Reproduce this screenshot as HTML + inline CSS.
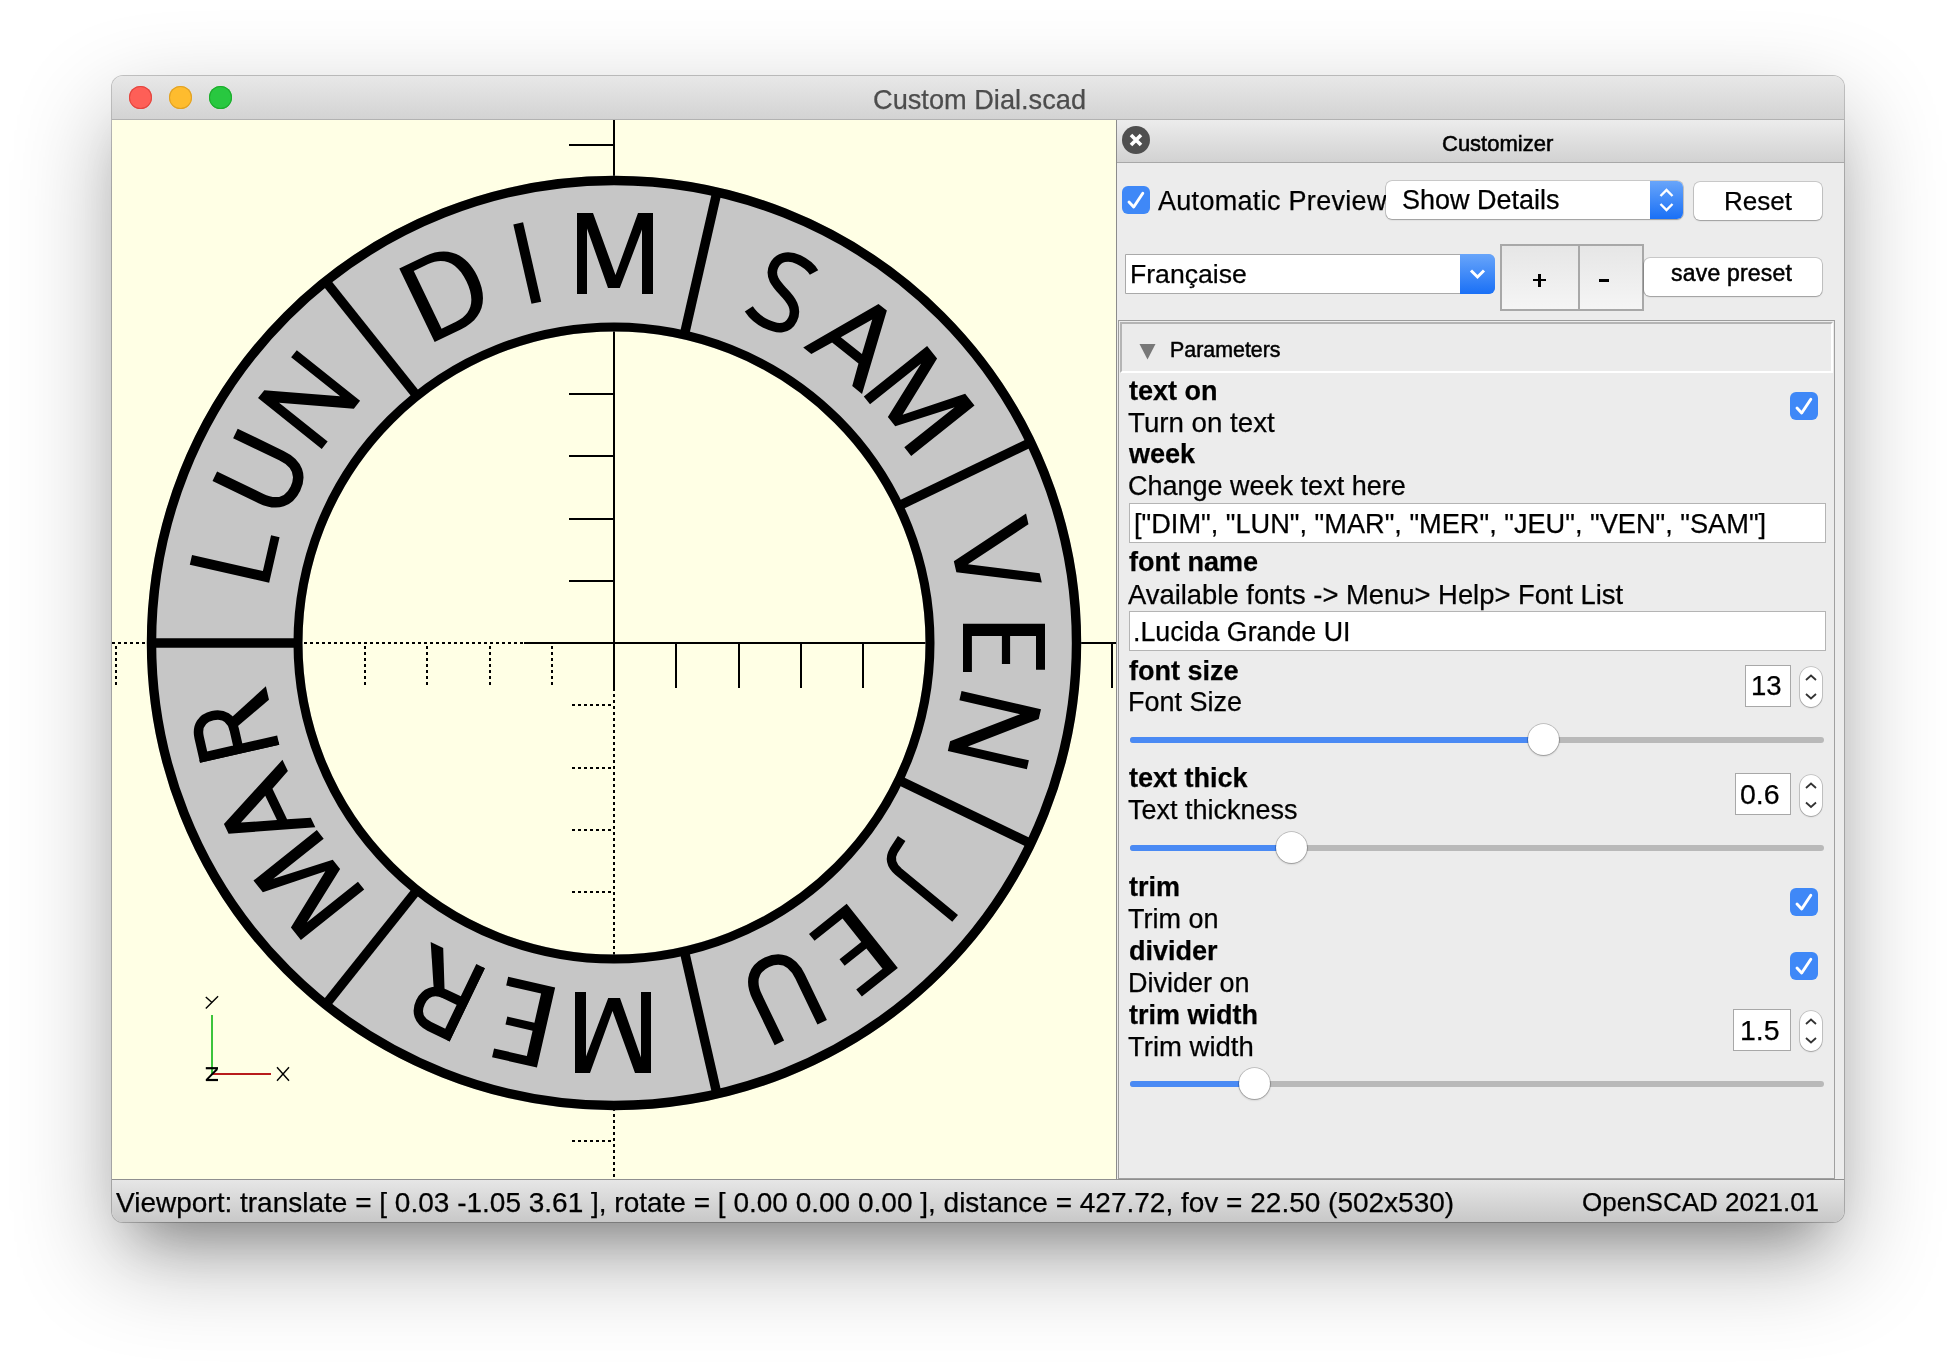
<!DOCTYPE html>
<html><head><meta charset="utf-8">
<style>
html,body{margin:0;padding:0;width:1956px;height:1370px;background:#fff;overflow:hidden;font-family:"Liberation Sans",sans-serif;color:#000}
.a{position:absolute}
.t{position:absolute;white-space:pre;line-height:1;font-size:27px;will-change:transform;-webkit-text-stroke:0.25px currentColor}
.b{font-weight:bold}
#win{left:112px;top:76px;width:1732px;height:1146px;border-radius:11px;background:#ececec;box-shadow:0 0 0 1px rgba(0,0,0,0.22),0 37px 98px rgba(0,0,0,0.30),0 40px 50px -30px rgba(0,0,0,0.30)}
#title{left:112px;top:76px;width:1732px;height:43px;border-radius:11px 11px 0 0;background:linear-gradient(#e8e8e8,#d3d3d3);border-bottom:1px solid #b2b2b2}
.light{width:23px;height:23px;border-radius:50%;top:86px}
#vp{left:112px;top:120px;width:1004px;height:1059px;background:#ffffe5;overflow:hidden}
#dockhdr{left:1117px;top:120px;width:727px;height:42px;background:linear-gradient(#ececec,#d2d2d2);border-bottom:1px solid #a8a8a8}
#status{left:112px;top:1179px;width:1732px;height:43px;border-radius:0 0 11px 11px;background:linear-gradient(#e6e6e6,#c8c8c8);border-top:1px solid #8f8f8f;box-sizing:border-box}
.cb{width:28px;height:28px;border-radius:6px;background:#3f88f7}
.cb svg{position:absolute;left:0;top:0}
.field{background:#fff;border:1px solid #b4b4b4;box-sizing:border-box}
.slider{height:6px;border-radius:3px;background:#b9b9b9}
.fill{height:6px;border-radius:3px;background:#4a8af4}
.knob{width:31px;height:31px;border-radius:50%;background:#fff;box-shadow:0 0 0 0.8px rgba(0,0,0,0.22),0 1px 2px rgba(0,0,0,0.25)}
.step{width:22px;border-radius:11px;background:#fff;box-shadow:0 0 0 0.8px rgba(0,0,0,0.2),0 1px 1.5px rgba(0,0,0,0.2)}
.btn{background:#fff;border-radius:6px;box-shadow:0 0 0 0.8px rgba(0,0,0,0.2),0 1px 1.5px rgba(0,0,0,0.22)}
</style></head><body>
<div id="win" class="a"></div>
<div id="title" class="a"></div>
<div class="a light" style="left:128.5px;background:#fe5f57;box-shadow:inset 0 0 0 1px #e2463f"></div>
<div class="a light" style="left:168.5px;background:#febc2e;box-shadow:inset 0 0 0 1px #e0a125"></div>
<div class="a light" style="left:208.5px;background:#28c840;box-shadow:inset 0 0 0 1px #1dac2c"></div>
<div class="t" style="left:873px;top:86px;color:#4d4d4d;font-size:27.2px">Custom Dial.scad</div>

<div id="vp" class="a">
<svg width="1004" height="1059" viewBox="0 0 1004 1059" style="position:absolute;left:0;top:0">
<g shape-rendering="crispEdges"><line x1="0.00" y1="523.00" x2="412.00" y2="523.00" stroke="#000" stroke-width="2" stroke-dasharray="3 3"/>
<line x1="412.00" y1="523.00" x2="1004.00" y2="523.00" stroke="#000" stroke-width="2"/>
<line x1="502.00" y1="0.00" x2="502.00" y2="570.60" stroke="#000" stroke-width="2"/>
<line x1="502.00" y1="574.00" x2="502.00" y2="1059.00" stroke="#000" stroke-width="2" stroke-dasharray="3 3"/>
<line x1="564.25" y1="523.00" x2="564.25" y2="568.00" stroke="#000" stroke-width="2"/>
<line x1="439.75" y1="526.00" x2="439.75" y2="565.00" stroke="#000" stroke-width="2" stroke-dasharray="3 3"/>
<line x1="457.00" y1="460.75" x2="502.00" y2="460.75" stroke="#000" stroke-width="2"/>
<line x1="460.00" y1="585.25" x2="502.00" y2="585.25" stroke="#000" stroke-width="2" stroke-dasharray="3 3"/>
<line x1="626.50" y1="523.00" x2="626.50" y2="568.00" stroke="#000" stroke-width="2"/>
<line x1="377.50" y1="526.00" x2="377.50" y2="565.00" stroke="#000" stroke-width="2" stroke-dasharray="3 3"/>
<line x1="457.00" y1="398.50" x2="502.00" y2="398.50" stroke="#000" stroke-width="2"/>
<line x1="460.00" y1="647.50" x2="502.00" y2="647.50" stroke="#000" stroke-width="2" stroke-dasharray="3 3"/>
<line x1="688.75" y1="523.00" x2="688.75" y2="568.00" stroke="#000" stroke-width="2"/>
<line x1="315.25" y1="526.00" x2="315.25" y2="565.00" stroke="#000" stroke-width="2" stroke-dasharray="3 3"/>
<line x1="457.00" y1="336.25" x2="502.00" y2="336.25" stroke="#000" stroke-width="2"/>
<line x1="460.00" y1="709.75" x2="502.00" y2="709.75" stroke="#000" stroke-width="2" stroke-dasharray="3 3"/>
<line x1="751.00" y1="523.00" x2="751.00" y2="568.00" stroke="#000" stroke-width="2"/>
<line x1="253.00" y1="526.00" x2="253.00" y2="565.00" stroke="#000" stroke-width="2" stroke-dasharray="3 3"/>
<line x1="457.00" y1="274.00" x2="502.00" y2="274.00" stroke="#000" stroke-width="2"/>
<line x1="460.00" y1="772.00" x2="502.00" y2="772.00" stroke="#000" stroke-width="2" stroke-dasharray="3 3"/>
<line x1="1000.00" y1="523.00" x2="1000.00" y2="568.00" stroke="#000" stroke-width="2"/>
<line x1="4.00" y1="526.00" x2="4.00" y2="565.00" stroke="#000" stroke-width="2" stroke-dasharray="3 3"/>
<line x1="457.00" y1="25.00" x2="502.00" y2="25.00" stroke="#000" stroke-width="2"/>
<line x1="460.00" y1="1021.00" x2="502.00" y2="1021.00" stroke="#000" stroke-width="2" stroke-dasharray="3 3"/></g>
<path fill="#c6c6c6" fill-rule="evenodd" d="M34.80000000000001,523a467.2,467.2 0 1,0 934.4,0a467.2,467.2 0 1,0 -934.4,0Z M190.5,523a311.5,311.5 0 1,0 623.0,0a311.5,311.5 0 1,0 -623.0,0Z"/>
<circle cx="502" cy="523" r="462.5" fill="none" stroke="#000" stroke-width="9.4"/>
<circle cx="502" cy="523" r="316.0" fill="none" stroke="#000" stroke-width="9"/>
<line x1="571.76" y1="217.36" x2="605.52" y2="69.46" stroke="#000" stroke-width="9.5"/>
<line x1="306.54" y1="277.90" x2="211.95" y2="159.29" stroke="#000" stroke-width="9.5"/>
<line x1="188.50" y1="523.00" x2="36.80" y2="523.00" stroke="#000" stroke-width="9.5"/>
<line x1="306.54" y1="768.10" x2="211.95" y2="886.71" stroke="#000" stroke-width="9.5"/>
<line x1="571.76" y1="828.64" x2="605.52" y2="976.54" stroke="#000" stroke-width="9.5"/>
<line x1="784.45" y1="659.02" x2="921.13" y2="724.84" stroke="#000" stroke-width="9.5"/>
<line x1="784.45" y1="386.98" x2="921.13" y2="321.16" stroke="#000" stroke-width="9.5"/>
<g font-family="Liberation Sans" font-size="117" text-anchor="middle" fill="#000"><path transform="translate(502,523) rotate(-25.714) translate(0,-349)" fill-rule="evenodd" d="M-31,-81.5 L-2,-81.5 C22,-81.5 36,-66 36,-41 C36,-14 22,0 -2,0 L-31,0 Z M-19,-73 L-3,-73 C14,-73 24,-62 24,-41 C24,-19 14,-9 -3,-9 L-19,-9 Z" fill="#000"/><rect transform="translate(502,523) rotate(-12.857) translate(0,-349)" x="-5" y="-81.5" width="10" height="81.5" fill="#000"/><path transform="translate(502,523) rotate(0.000) translate(0,-349)" d="M-37,-81 L-21,-81 L1.5,-19 L24,-81 L39,-81 L39,0 L28,0 L28,-64.4 L5.8,-6.1 L-6,-6.1 L-27,-65.4 L-27,0 L-37,0 Z" fill="#000"/><path transform="translate(502,523) rotate(25.714) translate(0,-349)" d="M19.5,-71.5 C14,-75.5 8,-76.5 0,-76.5 C-12,-76.5 -19.5,-70 -19.5,-60 C-19.5,-49 -10,-45 0,-41 C11,-37 20.5,-32 20.5,-20 C20.5,-9 12,-4.5 -1,-4.5 C-10,-4.5 -17,-6.5 -23.5,-10.5" fill="none" stroke="#000" stroke-width="9.5"/><g transform="translate(502,523) rotate(38.571) translate(0,-349)"><path fill-rule="evenodd" d="M-4.6,-81 L6.1,-81 L38.6,-0.4 L26.1,-0.4 L16.8,-22 L-16.9,-22 L-25.9,0 L-36.3,0 Z M0.1,-65 L13.7,-31.5 L-13.3,-31.5 Z" fill="#000"/></g><path transform="translate(502,523) rotate(51.428) translate(0,-349)" d="M-37,-81 L-21,-81 L1.5,-19 L24,-81 L39,-81 L39,0 L28,0 L28,-64.4 L5.8,-6.1 L-6,-6.1 L-27,-65.4 L-27,0 L-37,0 Z" fill="#000"/><g transform="translate(502,523) rotate(77.143) translate(0,-349)"><path d="M-34.5,-81.5 L-23.5,-81.5 L2,-13.6 L26.7,-81.5 L36.3,-81.5 L7.3,-0.5 L-4.1,-0.5 Z" fill="#000"/></g><path transform="translate(502,523) rotate(90.000) translate(0,-349)" d="M-19.3,0 L28.9,0 L28.9,-8.9 L-6.9,-8.9 L-6.9,-38.9 L20.9,-38.9 L20.9,-47.1 L-6.9,-47.1 L-6.9,-73 L26.7,-73 L26.7,-82 L-19.3,-82 Z" fill="#000"/><g transform="translate(502,523) rotate(102.857) translate(0,-349)"><path d="M-30.5,-82 L-20.4,-82 L22.2,-19 L22.1,-81.6 L31.2,-81.6 L31,-0.5 L21,-0.5 L-20.9,-62.7 L-21,-0.5 L-30.5,-0.5 Z" fill="#000"/></g><path transform="translate(502,523) rotate(128.572) translate(0,-349)" d="M2.6,-89.4 L1.4,-16 Q0.6,-1 -12,0.8 L-26.5,2.2" fill="none" stroke="#000" stroke-width="9"/><path transform="translate(502,523) rotate(141.429) translate(0,-349)" d="M-19.3,0 L28.9,0 L28.9,-8.9 L-6.9,-8.9 L-6.9,-38.9 L20.9,-38.9 L20.9,-47.1 L-6.9,-47.1 L-6.9,-73 L26.7,-73 L26.7,-82 L-19.3,-82 Z" fill="#000"/><g transform="translate(502,523) rotate(154.286) translate(0,-349)"><path d="M-23,-83 L-23,-32 C-23,-13 -13,-5 0.8,-5 C14.6,-5 24.5,-13 24.5,-32 L24.5,-83" fill="none" stroke="#000" stroke-width="10.5"/></g><path transform="translate(502,523) rotate(180.000) translate(0,-349)" d="M-37,-81 L-21,-81 L1.5,-19 L24,-81 L39,-81 L39,0 L28,0 L28,-64.4 L5.8,-6.1 L-6,-6.1 L-27,-65.4 L-27,0 L-37,0 Z" fill="#000"/><path transform="translate(502,523) rotate(192.857) translate(0,-349)" d="M-19.3,0 L28.9,0 L28.9,-8.9 L-6.9,-8.9 L-6.9,-38.9 L20.9,-38.9 L20.9,-47.1 L-6.9,-47.1 L-6.9,-73 L26.7,-73 L26.7,-82 L-19.3,-82 Z" fill="#000"/><g transform="translate(502,523) rotate(205.714) translate(0,-349)"><path d="M-20,0 L-20,-76.5 L0,-76.5 C12,-76.5 18.5,-69 18.5,-58.5 C18.5,-48 12,-40.5 0,-40.5 L-20,-40.5" fill="none" stroke="#000" stroke-width="9.5"/><path d="M-2,-45 L10,-45 L35.4,0 L21.5,0 Z" fill="#000"/><rect x="-24.75" y="-81.25" width="3" height="81.25" fill="#000"/></g><path transform="translate(502,523) rotate(231.429) translate(0,-349)" d="M-37,-81 L-21,-81 L1.5,-19 L24,-81 L39,-81 L39,0 L28,0 L28,-64.4 L5.8,-6.1 L-6,-6.1 L-27,-65.4 L-27,0 L-37,0 Z" fill="#000"/><g transform="translate(502,523) rotate(244.286) translate(0,-349)"><path fill-rule="evenodd" d="M-4.6,-81 L6.1,-81 L38.6,-0.4 L26.1,-0.4 L16.8,-22 L-16.9,-22 L-25.9,0 L-36.3,0 Z M0.1,-65 L13.7,-31.5 L-13.3,-31.5 Z" fill="#000"/></g><g transform="translate(502,523) rotate(257.143) translate(0,-349)"><path d="M-20,0 L-20,-76.5 L0,-76.5 C12,-76.5 18.5,-69 18.5,-58.5 C18.5,-48 12,-40.5 0,-40.5 L-20,-40.5" fill="none" stroke="#000" stroke-width="9.5"/><path d="M-2,-45 L10,-45 L35.4,0 L21.5,0 Z" fill="#000"/><rect x="-24.75" y="-81.25" width="3" height="81.25" fill="#000"/></g><g transform="translate(502,523) rotate(-77.143) translate(0,-349)"><path d="M-18,-82 L-8,-82 L-8,-9.3 L28.7,-9.3 L28.7,-0.6 L-18,-0.6 Z" fill="#000"/></g><g transform="translate(502,523) rotate(-64.286) translate(0,-349)"><path d="M-23,-83 L-23,-32 C-23,-13 -13,-5 0.8,-5 C14.6,-5 24.5,-13 24.5,-32 L24.5,-83" fill="none" stroke="#000" stroke-width="10.5"/></g><g transform="translate(502,523) rotate(-51.429) translate(0,-349)"><path d="M-30.5,-82 L-20.4,-82 L22.2,-19 L22.1,-81.6 L31.2,-81.6 L31,-0.5 L21,-0.5 L-20.9,-62.7 L-21,-0.5 L-30.5,-0.5 Z" fill="#000"/></g></g>
<line x1="100" y1="895" x2="100" y2="954" stroke="#3cc43c" stroke-width="2"/><line x1="100" y1="954" x2="159" y2="954" stroke="#b81c1c" stroke-width="2"/><polyline points="93.8,888.5 106.1,876.2" fill="none" stroke="#000" stroke-width="1.4"/><polyline points="93.8,877.1 100.0,882.6" fill="none" stroke="#000" stroke-width="1.4"/><polyline points="93.8,948.2 106.0,948.2" fill="none" stroke="#000" stroke-width="2.2"/><polyline points="105.2,949.0 95.0,959.4" fill="none" stroke="#000" stroke-width="2.0"/><polyline points="93.8,960.0 106.0,960.0" fill="none" stroke="#000" stroke-width="2.2"/><polyline points="165.0,947.3 177.0,960.8" fill="none" stroke="#000" stroke-width="1.4"/><polyline points="165.0,960.8 177.0,947.3" fill="none" stroke="#000" stroke-width="1.4"/>
</svg>
</div>
<div class="a" style="left:1116px;top:120px;width:1px;height:1059px;background:#8c8c8c"></div>

<div id="dockhdr" class="a"></div>
<div class="a" style="left:1122px;top:126px;width:28px;height:28px;border-radius:50%;background:#4f4f4f"></div>
<svg class="a" style="left:1122px;top:126px" width="28" height="28"><path d="M9,9 L19,19 M19,9 L9,19" stroke="#fff" stroke-width="3.6" stroke-linecap="butt"/></svg>
<div class="t" style="left:1442px;top:133px;font-size:22px;-webkit-text-stroke:0.55px #000">Customizer</div>

<!-- top controls -->
<div class="a cb" style="left:1122px;top:186px"><svg width="28" height="28"><polyline points="7,16 11.7,21 20.8,7.2" fill="none" stroke="#fff" stroke-width="2.9" stroke-linecap="round" stroke-linejoin="round"/></svg></div>
<div class="t" style="left:1158px;top:188px;letter-spacing:0.3px">Automatic Preview</div>
<div class="a btn" style="left:1386px;top:181px;width:297px;height:38px"></div>
<div class="a" style="left:1650px;top:181px;width:33px;height:38px;border-radius:0 6px 6px 0;background:linear-gradient(#68a5fa,#1a70f6)"></div>
<svg class="a" style="left:1650px;top:181px" width="33" height="38"><polyline points="10.5,15 16.5,9 22.5,15" fill="none" stroke="#fff" stroke-width="2.4"/><polyline points="10.5,23 16.5,29 22.5,23" fill="none" stroke="#fff" stroke-width="2.4"/></svg>
<div class="t" style="left:1402px;top:187px;font-size:27px">Show Details</div>
<div class="a btn" style="left:1694px;top:182px;width:128px;height:38px"></div>
<div class="t" style="left:1724px;top:188px;font-size:26px">Reset</div>

<div class="a field" style="left:1125px;top:254px;width:370px;height:40px;border-color:#a9a9a9;border-radius:0 7px 7px 0"></div>
<div class="a" style="left:1460px;top:254px;width:35px;height:40px;border-radius:0 6px 6px 0;background:linear-gradient(#68a5fa,#1a70f6)"></div>
<svg class="a" style="left:1460px;top:254px" width="35" height="40"><polyline points="11,16.5 17.5,23 24,16.5" fill="none" stroke="#fff" stroke-width="3"/></svg>
<div class="t" style="left:1130px;top:261px;font-size:26.6px">Française</div>

<div class="a" style="left:1500px;top:244px;width:144px;height:67px;box-sizing:border-box;border:2px solid #a8a8a8;background:linear-gradient(#e6e6e6,#f5f5f5)"></div>
<div class="a" style="left:1578px;top:244px;width:2px;height:67px;background:#a8a8a8"></div>
<div class="a" style="left:1533px;top:279px;width:13px;height:2.4px;background:#000"></div><div class="a" style="left:1538.4px;top:273.5px;width:2.4px;height:13.4px;background:#000"></div>
<div class="a" style="left:1599px;top:279px;width:9.6px;height:2.5px;background:#000"></div>
<div class="a btn" style="left:1644px;top:257.5px;width:178px;height:38.5px"></div>
<div class="t" style="left:1671px;top:262px;font-size:23px;letter-spacing:0.2px;-webkit-text-stroke:0.5px #000">save preset</div>

<!-- scroll area -->
<div class="a" style="left:1118px;top:320px;width:717px;height:859px;box-sizing:border-box;border-left:1px solid #9c9c9c;border-top:1px solid #9c9c9c;border-right:1px solid #a0a0a0;border-bottom:1px solid #a0a0a0;background:#ececec"></div>
<div class="a" style="left:1120px;top:322px;width:713px;height:51px;box-sizing:border-box;border-top:2px solid #b4b4b4;border-left:2px solid #b4b4b4;border-right:2px solid #fff;border-bottom:2px solid #fff;background:#ebebeb"></div>
<svg class="a" style="left:1139px;top:343px" width="18" height="17"><polygon points="0.5,1 16.5,1 8.5,16.5" fill="#787878"/></svg>
<div class="t" style="left:1170px;top:339.5px;font-size:21.4px;-webkit-text-stroke:0.5px #000">Parameters</div>

<div class="t b" style="left:1129px;top:378px">text on</div>
<div class="t" style="left:1128px;top:409px;font-size:27.7px">Turn on text</div>
<div class="a cb" style="left:1790px;top:392px"><svg width="28" height="28"><polyline points="7,16 11.7,21 20.8,7.2" fill="none" stroke="#fff" stroke-width="2.9" stroke-linecap="round" stroke-linejoin="round"/></svg></div>
<div class="t b" style="left:1129px;top:441px">week</div>
<div class="t" style="left:1128px;top:473px;font-size:27px">Change week text here</div>
<div class="a field" style="left:1129px;top:503px;width:697px;height:40px"></div>
<div class="t" style="left:1134px;top:510px;font-size:27.2px">["DIM", "LUN", "MAR", "MER", "JEU", "VEN", "SAM"]</div>
<div class="t b" style="left:1129px;top:549px">font name</div>
<div class="t" style="left:1128px;top:581px;font-size:27.4px">Available fonts -&gt; Menu&gt; Help&gt; Font List</div>
<div class="a field" style="left:1129px;top:611px;width:697px;height:40px"></div>
<div class="t" style="left:1133px;top:619px;font-size:26.8px">.Lucida Grande UI</div>

<div class="t b" style="left:1129px;top:658px">font size</div>
<div class="t" style="left:1128px;top:689px;font-size:27px">Font Size</div>
<div class="a field" style="left:1745px;top:665px;width:46px;height:42px;border-color:#a8a8a8"></div>
<div class="t" style="left:1751px;top:672px;font-size:27.5px">13</div>
<div class="a step" style="left:1800px;top:667px;height:40px"></div>
<svg class="a" style="left:1800px;top:667px" width="22" height="40"><polyline points="6,13 11,8.5 16,13" fill="none" stroke="#333" stroke-width="1.8"/><polyline points="6,27 11,31.5 16,27" fill="none" stroke="#333" stroke-width="1.8"/></svg>
<div class="a slider" style="left:1130px;top:737px;width:694px"></div>
<div class="a fill" style="left:1130px;top:737px;width:414px"></div>
<div class="a knob" style="left:1528px;top:724px"></div>

<div class="t b" style="left:1129px;top:765px">text thick</div>
<div class="t" style="left:1128px;top:797px;font-size:27px">Text thickness</div>
<div class="a field" style="left:1735px;top:773px;width:56px;height:42px;border-color:#a8a8a8"></div>
<div class="t" style="left:1740px;top:780px;font-size:28.5px">0.6</div>
<div class="a step" style="left:1800px;top:775px;height:41px"></div>
<svg class="a" style="left:1800px;top:775px" width="22" height="41"><polyline points="6,13 11,8.5 16,13" fill="none" stroke="#333" stroke-width="1.8"/><polyline points="6,27.5 11,32 16,27.5" fill="none" stroke="#333" stroke-width="1.8"/></svg>
<div class="a slider" style="left:1130px;top:845px;width:694px"></div>
<div class="a fill" style="left:1130px;top:845px;width:162px"></div>
<div class="a knob" style="left:1276px;top:832px"></div>

<div class="t b" style="left:1129px;top:874px">trim</div>
<div class="t" style="left:1128px;top:906px;font-size:27px">Trim on</div>
<div class="a cb" style="left:1790px;top:888px"><svg width="28" height="28"><polyline points="7,16 11.7,21 20.8,7.2" fill="none" stroke="#fff" stroke-width="2.9" stroke-linecap="round" stroke-linejoin="round"/></svg></div>
<div class="t b" style="left:1129px;top:938px">divider</div>
<div class="t" style="left:1128px;top:970px;font-size:27px">Divider on</div>
<div class="a cb" style="left:1790px;top:952px"><svg width="28" height="28"><polyline points="7,16 11.7,21 20.8,7.2" fill="none" stroke="#fff" stroke-width="2.9" stroke-linecap="round" stroke-linejoin="round"/></svg></div>
<div class="t b" style="left:1129px;top:1002px">trim width</div>
<div class="t" style="left:1128px;top:1033px;font-size:27.5px">Trim width</div>
<div class="a field" style="left:1733px;top:1009px;width:58px;height:42px;border-color:#a8a8a8"></div>
<div class="t" style="left:1740px;top:1016px;font-size:28.5px">1.5</div>
<div class="a step" style="left:1800px;top:1011px;height:40px"></div>
<svg class="a" style="left:1800px;top:1011px" width="22" height="40"><polyline points="6,13 11,8.5 16,13" fill="none" stroke="#333" stroke-width="1.8"/><polyline points="6,27 11,31.5 16,27" fill="none" stroke="#333" stroke-width="1.8"/></svg>
<div class="a slider" style="left:1130px;top:1081px;width:694px"></div>
<div class="a fill" style="left:1130px;top:1081px;width:125px"></div>
<div class="a knob" style="left:1239px;top:1068px"></div>

<div id="status" class="a"></div>
<div class="t" style="left:116px;top:1189px;font-size:28px">Viewport: translate = [ 0.03 -1.05 3.61 ], rotate = [ 0.00 0.00 0.00 ], distance = 427.72, fov = 22.50 (502x530)</div>
<div class="t" style="left:1582px;top:1189px;font-size:26px">OpenSCAD 2021.01</div>
</body></html>
